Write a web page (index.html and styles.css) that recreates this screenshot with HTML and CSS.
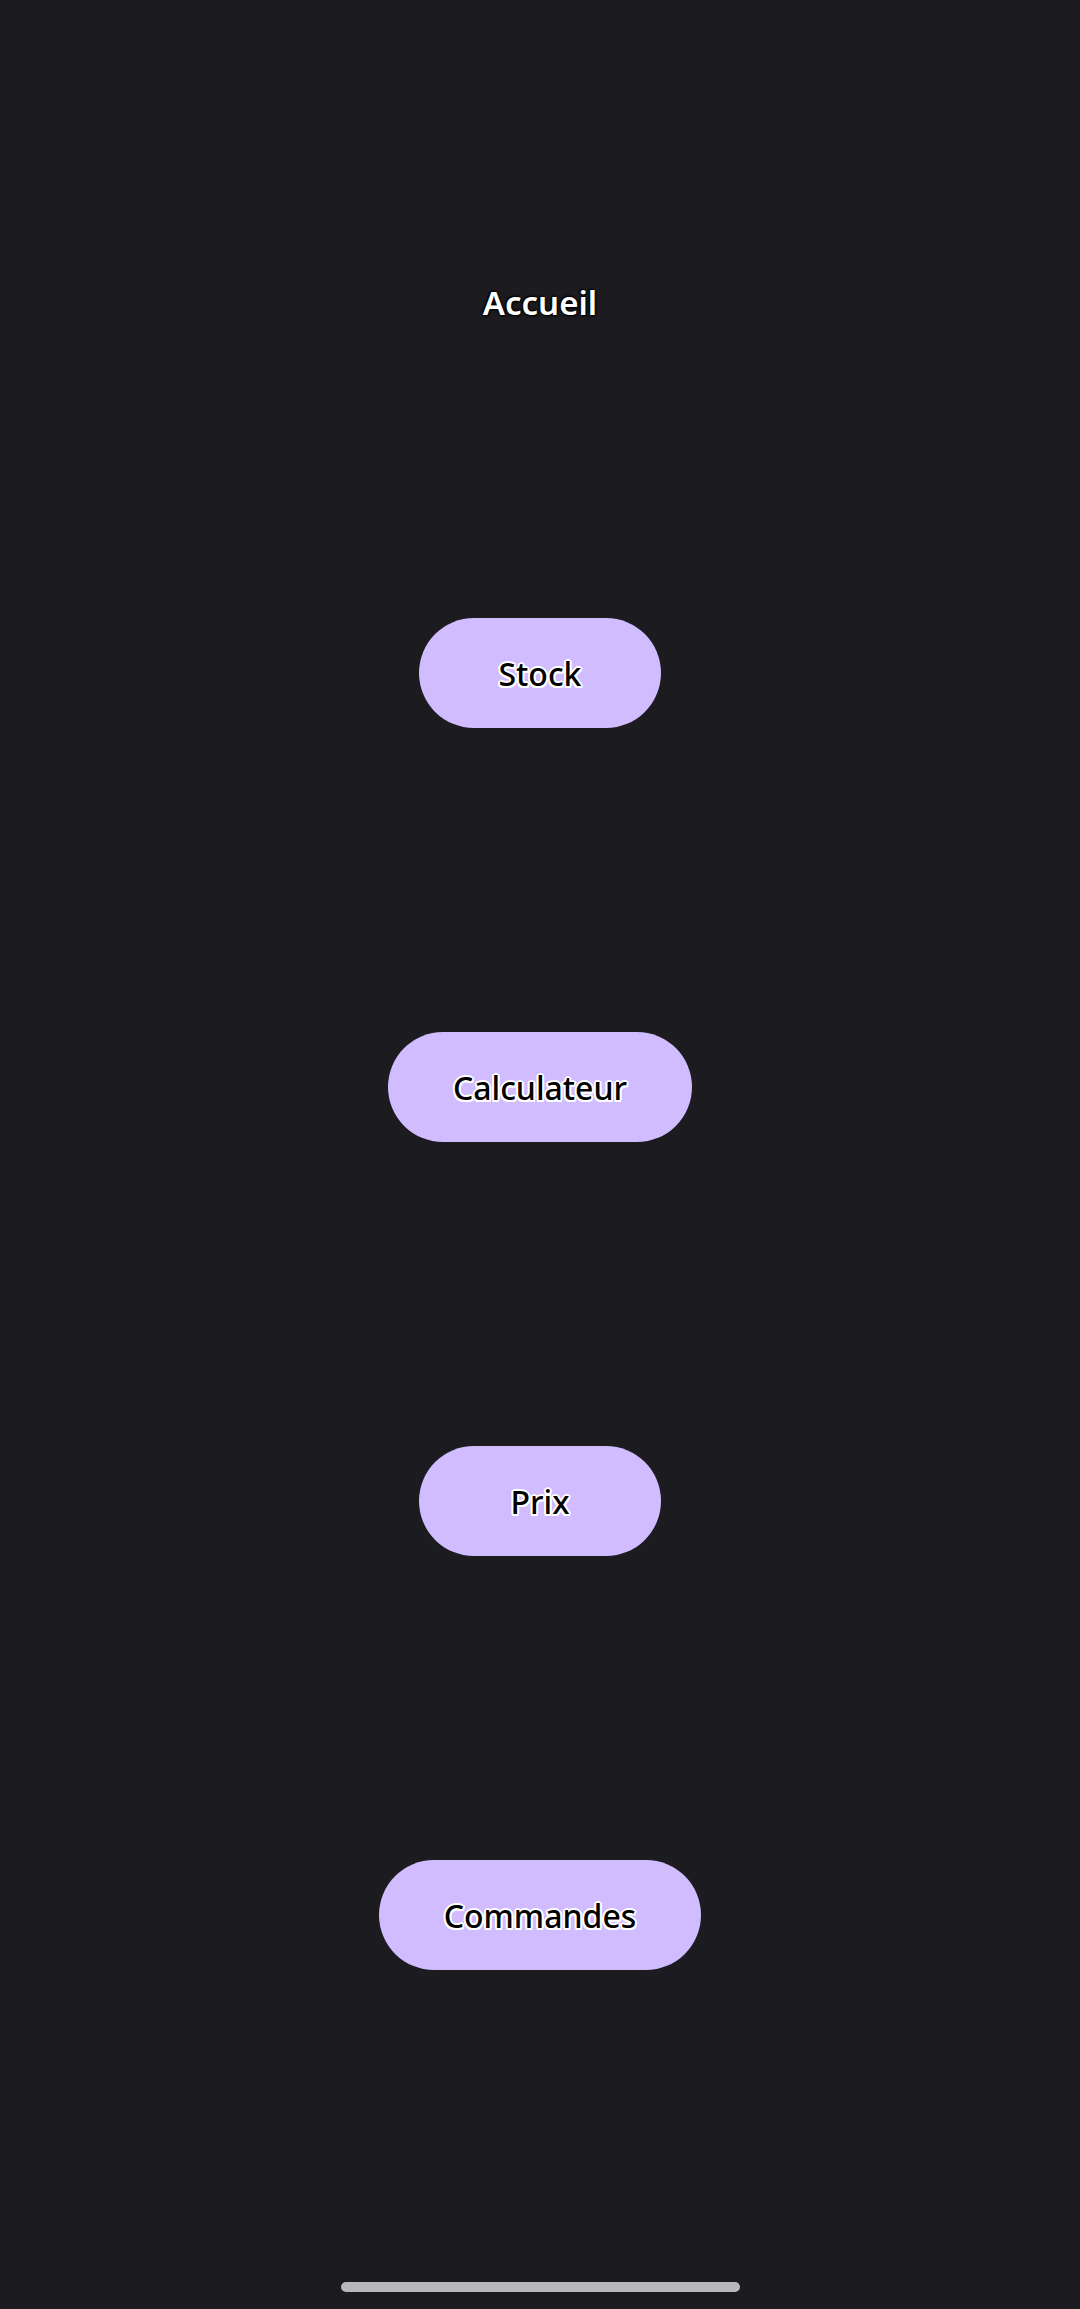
FILE: index.html
```html
<!DOCTYPE html>
<html lang="fr">
<head>
<meta charset="utf-8">
<title>Accueil</title>
<link rel="stylesheet" href="styles.css">
</head>
<body>
<main class="screen">
  <h1 class="title">Accueil</h1>
  <nav class="menu">
    <button class="pill">Stock</button>
    <button class="pill">Calculateur</button>
    <button class="pill">Prix</button>
    <button class="pill">Commandes</button>
  </nav>
  <div class="home-indicator"></div>
</main>
</body>
</html>
```
FILE: styles.css
```css
html, body {
  margin: 0;
  padding: 0;
  background: #1c1b20;
}
.screen {
  min-height: 2309px;
  display: flex;
  flex-direction: column;
  align-items: center;
  font-family: "Noto Sans", "Open Sans", sans-serif;
}
.title {
  margin: 279px 0 0;
  font-size: 33px;
  line-height: 48px;
  font-weight: 600;
  color: #ffffff;
  text-shadow: 0 0 3px #000, 1px 1px 2px #000, -1px -1px 2px #000;
}
.menu {
  margin-top: 291px;
  display: flex;
  flex-direction: column;
  align-items: center;
  gap: 304px;
}
.pill {
  height: 110px;
  min-width: 242px;
  padding: 0 65px;
  border: none;
  border-radius: 55px;
  background: #d0bcff;
  color: #000;
  font-family: "Noto Sans", "Open Sans", sans-serif;
  font-size: 32px;
  font-weight: 500;
  text-shadow: 2px 0 0 #fff, -2px 0 0 #fff, 0 2px 0 #fff, 0 -2px 0 #fff,
    1.5px 1.5px 0 #fff, -1.5px -1.5px 0 #fff, 1.5px -1.5px 0 #fff, -1.5px 1.5px 0 #fff;
}
.home-indicator {
  margin-top: auto;
  margin-bottom: 17px;
  width: 399px;
  height: 10px;
  border-radius: 5px;
  background: #b8b8bc;
}
```
